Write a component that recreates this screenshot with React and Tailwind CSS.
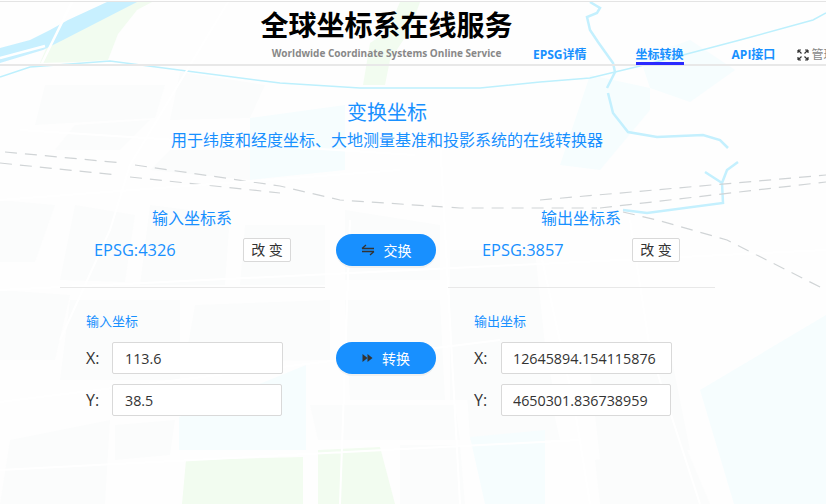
import React from 'react';

const blocks = [
    '45,85 165,85 155,118 35,125',
    '75,125 150,120 120,150 55,150',
    '180,72 265,85 250,118 170,120',
    '170,150 265,150 250,180 150,170',
    '0,200 55,205 35,262 0,262',
    '75,205 135,215 125,282 60,280',
    '150,205 230,215 225,285 140,285',
    '245,225 325,225 325,285 240,285',
    '0,290 70,295 55,360 0,360',
    '70,300 180,300 180,380 60,380',
    '195,305 330,300 330,360 185,362',
    '345,300 440,300 445,400 350,400',
    '345,210 440,225 440,280 345,280',
    '450,250 535,250 545,345 450,340',
    '450,325 545,345 555,400 450,400',
    '465,360 540,350 560,440 470,440',
    '590,370 670,350 690,450 600,460',
    '595,460 685,445 710,504 600,504',
    '10,440 110,420 105,504 0,504',
    '115,425 175,420 170,455 115,460',
    '310,405 455,405 460,440 318,440',
    '400,445 460,445 465,504 400,504',
];

const cyan = [
    '640,58 690,40 735,70 690,102 650,88',
    '590,75 650,88 650,110 600,170 560,165',
    '179,417 306,365 306,450 179,450',
    '470,437 545,430 545,504 485,504',
    '734,504 700,390 826,315 826,504',
    '250,118 345,105 345,170 250,180',
];

const green = [
    '40,63 48,44 122,2 152,2 137,10 118,34 108,60 77,62',
    '363,85 370,43 387,32 400,2 420,2 410,30 390,60 385,85',
    '182,504 186,460 303,457 303,504',
    '318,504 318,450 380,447 395,504',
];

// 背景地图
function MapBackground() {
    return (
        <svg className="absolute inset-0 h-full w-full" viewBox="0 0 826 504" fill="none">
            <rect width="826" height="504" fill="#fefefe" />
            {blocks.map((p) => <polygon key={p} points={p} fill="#fbfcfc" />)}
            {cyan.map((p) => <polygon key={p} points={p} fill="#f6fdfe" />)}
            {green.map((p) => <polygon key={p} points={p} fill="#f2fcf0" />)}
            <polygon points="0,48 30,40 50,30 68,20 107,2 137,2 63,40 43,50 0,63" fill="#c8f0ff" />
            <path d="M0 58 L45 46 M72 2 L42 63" stroke="#fff" strokeWidth="2.5" />
            <path d="M0 77 L30 67 L110 61 L280 83 L360 88 L480 88 L540 82 L590 78 L640 66 L683 55 L740 40 L813 20 L826 13" stroke="#bdf0fd" strokeWidth="1.5" />
            <path d="M590 2 L600 8 L597 13 L587 17 L590 30 L598 42 L613 63 L615 72 L607 88 M608 93 L613 113 L628 132 L657 137 L703 135 L720 140 L728 148 M738 162 L727 170 L722 183 L723 203 L647 213 L623 210 M705 172 L722 183" stroke="#c4f0fe" strokeWidth="2.5" />
            <g stroke="#d0d4d6" strokeWidth="1.2" strokeDasharray="12 8">
                <path d="M5 152 L123 163 M135 165 L280 186 L340 200 L460 208 L597 208" />
                <path d="M0 163 L117 175 M130 177 L280 193" />
                <path d="M540 200 L826 175 M600 208 L826 182" />
                <path d="M623 212 L657 220 L727 240 L826 290" />
            </g>
            <path d="M228 2 L130 165 L110 230 L60 340 M20 130 L415 155 M0 200 L400 170 M0 290 L826 250 M0 402 L500 340 M0 470 L580 440 M590 504 L575 410 L540 250 M700 504 L650 350 L630 220 M340 504 L350 220 M460 504 L440 140" stroke="#ffffff" strokeWidth="2" />
        </svg>
    );
}

function CoordInput({ label, value, labelClass, className }) {
    return (
        <div className="flex items-center">
            <span className={`text-[16px] text-[#333] ${labelClass}`}>{label}</span>
            <input
                readOnly
                value={value}
                className={`h-[32px] rounded-[2px] border border-[#d9d9d9] bg-white text-[14.3px] text-[#333] outline-none ${className}`}
            />
        </div>
    );
}

function PillButton({ icon, text }) {
    return (
        <button className="flex h-[32px] w-[100px] items-center justify-center gap-[9px] rounded-full bg-[#1890ff] text-[14px] text-white shadow-[0_2px_0_rgba(0,0,0,0.045)]">
            {icon}
            <span>{text}</span>
        </button>
    );
}

function SystemRow({ title, titleClass, code, codeClass }) {
    return (
        <div>
            <h3 className={`text-[16px] leading-[24px] text-[#1890ff] ${titleClass}`}>{title}</h3>
            <div className="mt-[8px] flex h-[24px] items-center">
                <span className={`text-[16.4px] text-[#1890ff] ${codeClass}`}>{code}</span>
                <button className="h-[24px] w-[48px] rounded-[2px] border border-[#d9d9d9] bg-white text-[14px] leading-none text-[#333]">改 变</button>
            </div>
        </div>
    );
}

const swapIcon = (
    <svg width="14" height="12" viewBox="0 0 14 12" fill="none" stroke="#333" strokeWidth="1.3">
        <path d="M1 4.5 H13 M1 4.5 L5 1" />
        <path d="M13 7.5 H1 M13 7.5 L9 11" />
    </svg>
);

const forwardIcon = (
    <svg width="11" height="10" viewBox="0 0 11 10" fill="#333">
        <path d="M0.5 1 L5.5 5 L0.5 9 Z" />
        <path d="M5.5 1 L10.5 5 L5.5 9 Z" />
    </svg>
);

const expandIcon = (
    <svg width="12" height="12" viewBox="0 0 12 12" fill="none" stroke="#333" strokeWidth="1.2">
        <path d="M1 1 L4.5 4.5 M1 1 H4 M1 1 V4" />
        <path d="M11 1 L7.5 4.5 M11 1 H8 M11 1 V4" />
        <path d="M1 11 L4.5 7.5 M1 11 H4 M1 11 V8" />
        <path d="M11 11 L7.5 7.5 M11 11 H8 M11 11 V8" />
    </svg>
);

export default function App() {
    const font = { fontFamily: '"Open Sans", "Noto Sans CJK SC", sans-serif' };

    return (
        <div className="relative h-[504px] w-[826px] overflow-hidden bg-white" style={font}>
            <MapBackground />

            <div className="relative">
                <header className="mt-px flex h-[65px] w-[900px] items-start border-t border-b-2 border-t-[#e4e4e4] border-b-[#e8e8e8]">
                    <div className="ml-[241px] w-[291px] text-center">
                        <h1 className="mt-[3px] text-[28px] leading-[40px] font-bold text-black">全球坐标系在线服务</h1>
                        <p className="mt-[1px] text-[10px] leading-[14px] font-bold whitespace-nowrap text-[#888]">Worldwide Coordinate Systems Online Service</p>
                    </div>
                    <nav className="ml-[1px] flex h-full items-start pt-[44px] text-[12px] leading-[18px] font-bold text-[#1890ff]">
                        <a>EPSG详情</a>
                        <a className="ml-[49px] h-[19px] border-b-[3px] border-[#2a2aff]">坐标转换</a>
                        <a className="ml-[48px]">API接口</a>
                        <div className="ml-[22px] flex items-center gap-[2px] pt-[3px] font-normal text-[#888]">
                            {expandIcon}
                            <span className="text-[12px] leading-none">管理</span>
                        </div>
                    </nav>
                </header>

                <main>
                    <div className="w-[774px] pt-[33px] text-center text-[#1890ff]">
                        <h2 className="text-[20px] leading-[28px]">变换坐标</h2>
                        <p className="mt-[1px] text-[16px] leading-[24px]">用于纬度和经度坐标、大地测量基准和投影系统的在线转换器</p>
                    </div>

                    <div className="mt-[54px] ml-[60px] flex">
                        <div className="w-[265px] border-b border-[#e8e8e8] pb-[25px] pl-[34px]">
                            <SystemRow title="输入坐标系" titleClass="ml-[58px]" code="EPSG:4326" codeClass="w-[149px]" />
                        </div>
                        <div className="w-[123px] pt-[28px] pl-[11px]">
                            <PillButton icon={swapIcon} text="交换" />
                        </div>
                        <div className="w-[267px] border-b border-[#e8e8e8] pb-[25px] pl-[34px]">
                            <SystemRow title="输出坐标系" titleClass="ml-[59px]" code="EPSG:3857" codeClass="w-[150px]" />
                        </div>
                    </div>

                    <div className="mt-[23px] ml-[60px] flex">
                        <div className="w-[265px] pl-[26px]">
                            <h4 className="text-[13px] leading-[20px] text-[#1890ff]">输入坐标</h4>
                            <div className="mt-[11px] flex flex-col gap-[10px]">
                                <CoordInput label="X:" value="113.6" labelClass="w-[26px]" className="w-[171px] pl-[12px]" />
                                <CoordInput label="Y:" value="38.5" labelClass="w-[26px]" className="w-[170px] pl-[12px]" />
                            </div>
                        </div>
                        <div className="w-[123px] pt-[31px] pl-[11px]">
                            <PillButton icon={forwardIcon} text="转换" />
                        </div>
                        <div className="w-[267px] pl-[26px]">
                            <h4 className="text-[13px] leading-[20px] text-[#1890ff]">输出坐标</h4>
                            <div className="mt-[11px] flex flex-col gap-[10px]">
                                <CoordInput label="X:" value="12645894.154115876" labelClass="w-[27px]" className="w-[171px] pl-[11px]" />
                                <CoordInput label="Y:" value="4650301.836738959" labelClass="w-[27px]" className="w-[170px] pl-[11px]" />
                            </div>
                        </div>
                    </div>
                </main>
            </div>
        </div>
    );
}
